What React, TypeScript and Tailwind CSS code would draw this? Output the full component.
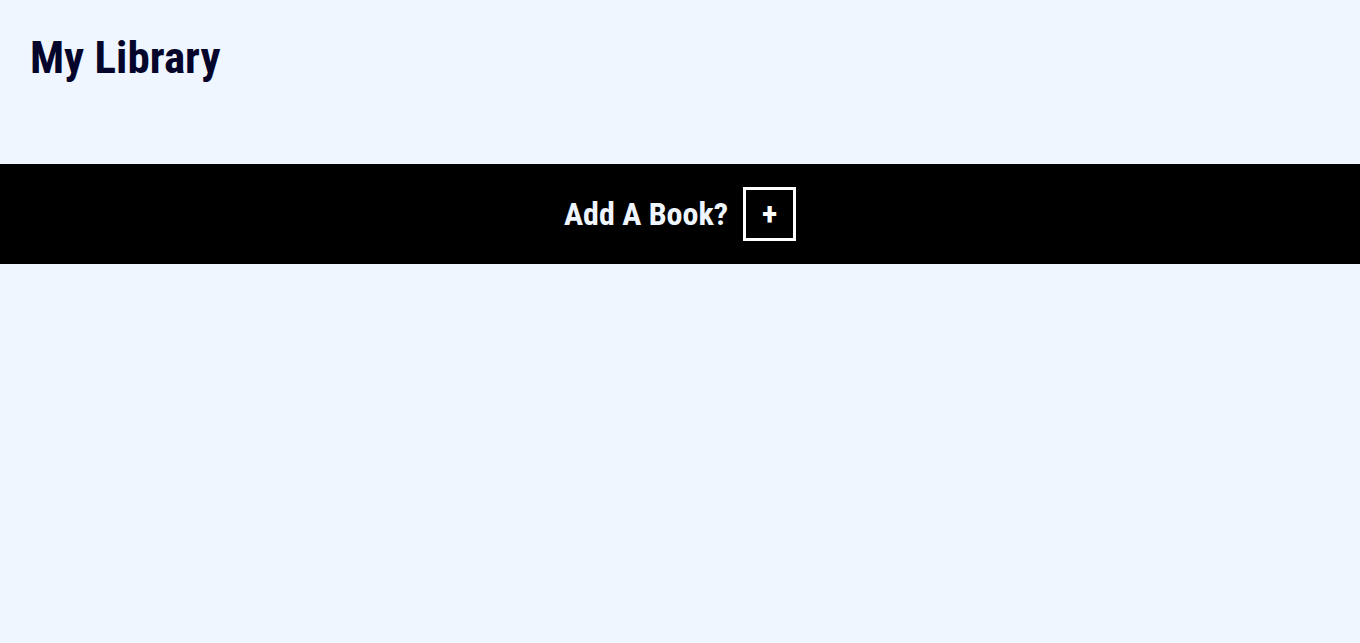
export default function App() {
  return (
    <div className="min-h-screen bg-[#eff6ff] font-['Roboto_Condensed','Roboto',sans-serif]">
      <header className="px-[30px] pt-[32px] pb-[80px]">
        <h1 className="text-[45px] leading-[52px] font-bold text-[#05052b]">My Library</h1>
      </header>
      <section className="flex h-[100px] items-center justify-center gap-[15px] bg-black">
        <span className="text-[32px] font-bold text-[#eff6ff]">Add A Book?</span>
        <button
          type="button"
          className="flex h-[54px] w-[53px] items-center justify-center border-[3px] border-white text-[32px] font-bold text-white"
        >
          +
        </button>
      </section>
    </div>
  );
}
